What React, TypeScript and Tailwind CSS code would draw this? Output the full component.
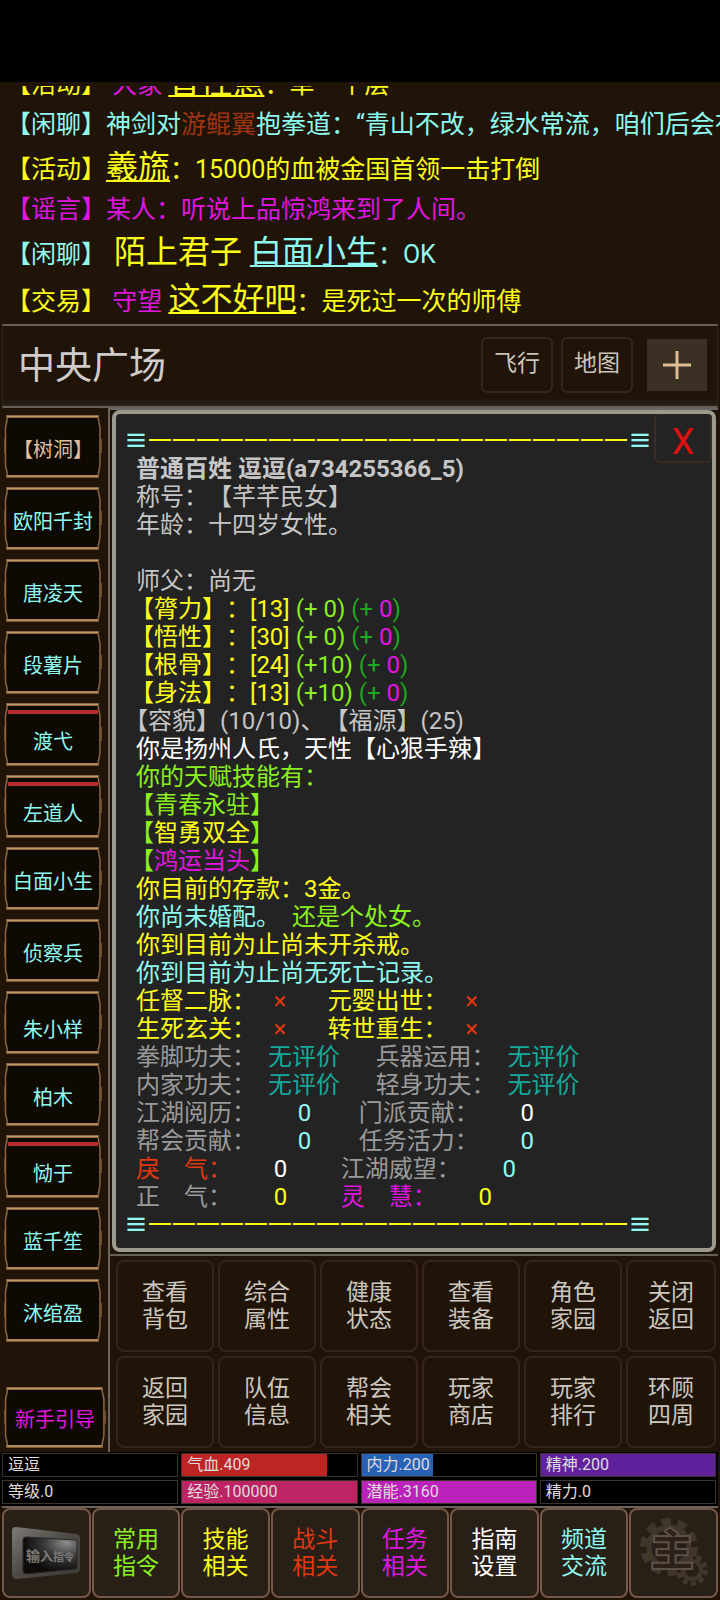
import type { ReactNode } from 'react'

const colors = {
  yellow: 'text-[#fdfd1a]',
  lime: 'text-[#8cf01e]',
  green: 'text-[#1fa51f]',
  magenta: 'text-[#e016e0]',
  cyan: 'text-[#8ffaf0]',
  teal: 'text-[#16a89c]',
  red: 'text-[#e0380f]',
  white: 'text-white',
  silver: 'text-[#c6c6c6]',
  gray: 'text-[#9a9a9a]',
}

type Color = keyof typeof colors

function C({ c, children }: { c: Color; children: ReactNode }) {
  return <span className={colors[c]}>{children}</span>
}

const npcs = [
  { name: '【树洞】', tan: true },
  { name: '欧阳千封' },
  { name: '唐凌天' },
  { name: '段薯片' },
  { name: '渡弋', hp: 100 },
  { name: '左道人', hp: 100 },
  { name: '白面小生' },
  { name: '侦察兵' },
  { name: '朱小样', hp: 0 },
  { name: '柏木' },
  { name: '恸于', hp: 100 },
  { name: '蓝千笙' },
  { name: '沐绾盈' },
]

const attributes = [
  { name: '膂力', value: '13', bonus: '(+ 0)' },
  { name: '悟性', value: '30', bonus: '(+ 0)' },
  { name: '根骨', value: '24', bonus: '(+10)' },
  { name: '身法', value: '13', bonus: '(+10)' },
]

const actions = [
  ['查看', '背包'],
  ['综合', '属性'],
  ['健康', '状态'],
  ['查看', '装备'],
  ['角色', '家园'],
  ['关闭', '返回'],
  ['返回', '家园'],
  ['队伍', '信息'],
  ['帮会', '相关'],
  ['玩家', '商店'],
  ['玩家', '排行'],
  ['环顾', '四周'],
]

const bars = [
  { label: '逗逗', fill: 0, color: 'bg-black' },
  { label: '气血.409', fill: 83, color: 'bg-[#bd2424]' },
  { label: '内力.200', fill: 41, color: 'bg-[#2862b4]' },
  { label: '精神.200', fill: 100, color: 'bg-[#60219d]' },
  { label: '等级.0', fill: 0, color: 'bg-black' },
  { label: '经验.100000', fill: 100, color: 'bg-[#bd2464]' },
  { label: '潜能.3160', fill: 100, color: 'bg-[#bb21bb]' },
  { label: '精力.0', fill: 0, color: 'bg-black' },
]

const menu: { lines: string[]; c: Color }[] = [
  { lines: ['常用', '指令'], c: 'lime' },
  { lines: ['技能', '相关'], c: 'yellow' },
  { lines: ['战斗', '相关'], c: 'red' },
  { lines: ['任务', '相关'], c: 'magenta' },
  { lines: ['指南', '设置'], c: 'white' },
  { lines: ['频道', '交流'], c: 'cyan' },
]

function Name({ children }: { children: ReactNode }) {
  return (
    <a href="#" className="text-[32px] leading-[47px] underline decoration-2 underline-offset-2">
      {children}
    </a>
  )
}

function ChatLine({ c, children }: { c: Color; children: ReactNode }) {
  return <p className={`shrink-0 whitespace-pre ${colors[c]}`}>{children}</p>
}

function ChatLog() {
  return (
    <div className="h-[242px] pt-1">
      <div className="flex h-full flex-col justify-end overflow-hidden pb-px pl-[6px] text-[25px] leading-[38px]">
        <ChatLine c="yellow">
          【活动】 <C c="magenta">大家</C> <Name>曾性慧</Name>：单一个层
        </ChatLine>
        <ChatLine c="cyan">
          【闲聊】神剑对<span className="text-[#9c3410]">游鲲翼</span>抱拳道：“青山不改，绿水常流，咱们后会有期”
        </ChatLine>
        <ChatLine c="yellow">
          【活动】<Name>羲旒</Name>：15000的血被金国首领一击打倒
        </ChatLine>
        <ChatLine c="magenta">【谣言】某人：听说上品惊鸿来到了人间。</ChatLine>
        <ChatLine c="cyan">
          【闲聊】<span className="text-[32px] leading-[47px] text-[#fdfd1a]"> 陌上君子 </span><Name>白面小生</Name>：OK
        </ChatLine>
        <ChatLine c="yellow">
          【交易】 <C c="magenta">守望</C> <Name>这不好吧</Name>：是死过一次的师傅
        </ChatLine>
      </div>
    </div>
  )
}

function Header() {
  return (
    <header className="mx-[2px] flex h-[84px] items-center border-x border-t-2 border-b-2 border-x-[#33261b] border-t-[#655f5a] border-b-[#655f5a] bg-gradient-to-b from-[#1f1407] from-90% to-[#2b201b] pr-[10px] pl-[15px]">
      <h1 className="flex-1 text-[37px] leading-none text-[#d0cccc]">中央广场</h1>
      <div className="flex items-center pb-[3px] text-[23px] text-[#c9c3bd]">
        <button className="h-14 w-[72px] rounded-md border-2 border-[#38241a]">飞行</button>
        <button className="ml-2 h-14 w-[72px] rounded-md border-2 border-[#38241a]">地图</button>
        <button aria-label="更多" className="ml-[14px] flex h-[52px] w-[60px] items-center justify-center bg-[#3a3024]">
          <svg viewBox="0 0 28 28" className="size-7" stroke="#e0bd92" strokeWidth="3">
            <path d="M14 0v28M0 14h28" />
          </svg>
        </button>
      </div>
    </header>
  )
}

function Frame() {
  return (
    <svg viewBox="0 0 98 63" preserveAspectRatio="none" fill="none" className="absolute inset-0 size-full">
      <path d="M4 1.5H94Q93 8 96 14V50Q93 56 94 61.5H4Q5 56 2 50V14Q5 8 4 1.5Z" fill="#0f0903" />
      <path d="M3 2C4 5 1.500 9 1.500 14V49C1.500 54 4 58 3 61" stroke="#8a6440" strokeWidth="1.500" />
      <path d="M94.500 2C93.500 5 96 9 96 14V49C96 54 93.500 58 94.500 61" stroke="#8a6440" strokeWidth="1.500" />
      <path d="M.6 24v14M97.400 24v14M95 27l2 5-2 5" stroke="#7a5636" />
      <path d="M2 1.500H95M2 61.500H95" stroke="#7a5838" strokeWidth="3" />
      <path d="M3 1.500H94M3 61H94" stroke="#c39a66" strokeWidth="1.500" />
    </svg>
  )
}

function Sidebar() {
  return (
    <aside className="flex w-[110px] shrink-0 flex-col border-r-2 border-[#6a645e] pt-[7px] pb-1 pl-1">
      <div className="flex flex-col gap-[9px]">
        {npcs.map((npc) => (
          <button
            key={npc.name}
            className={`relative flex h-[63px] w-[98px] flex-col px-1 pt-[7px] text-[20px] leading-none whitespace-nowrap ${npc.tan ? 'text-[#e0bfa0]' : 'text-[#8ffaf0]'}`}
          >
            <Frame />
            {npc.hp !== undefined && (
              <span className="relative h-1 w-full shrink-0">
                <span className="block h-full bg-[#b52a2a]" style={{ width: `${npc.hp}%` }} />
              </span>
            )}
            <span className="relative flex h-[55px] w-full shrink-0 items-center justify-center">{npc.name}</span>
          </button>
        ))}
      </div>
      <button className="relative mt-auto h-[61px] w-[102px] pt-1 text-[20px] leading-none text-[#e016e0]">
        <Frame />
        <span className="relative">新手引导</span>
      </button>
    </aside>
  )
}

function Rule() {
  return (
    <p className={`-ml-3 ${colors.yellow}`}>
      <span className="font-bold text-[#8ffaf0]">≡</span>
      一一一一一一一一一一一一一一一一一一一一
      <span className="font-bold text-[#8ffaf0]">≡</span>
    </p>
  )
}

function CharacterSheet() {
  return (
    <section className="relative mr-1 ml-[2px] flex-1 rounded-lg border-4 border-[#9c9a8c] bg-[#232323] pt-[13px] pb-[9px] pl-5 text-[24px] leading-[28px] whitespace-pre text-[#c6c6c6]">
      <Rule />
      <h2 className="font-bold">普通百姓 逗逗(a734255366_5)</h2>
      <p>称号：【芊芊民女】</p>
      <p>年龄：十四岁女性。</p>
      <p> </p>
      <p>师父：尚无</p>
      {attributes.map((a) => (
        <p key={a.name} className="-ml-[6px] text-[#fdfd1a]">
          【{a.name}】：[{a.value}] <C c="lime">{a.bonus}</C> <C c="green">(+ <C c="magenta">0</C>)</C>
        </p>
      ))}
      <p className="-ml-3">【容貌】(10/10)、【福源】(25)</p>
      <p className="text-white">你是扬州人氏，天性【心狠手辣】</p>
      <p className="text-[#8cf01e]">你的天赋技能有：</p>
      <p className="-ml-[6px] text-[#8cf01e]">【青春永驻】</p>
      <p className="-ml-[6px] text-[#8cf01e]">【<C c="yellow">智勇双全</C>】</p>
      <p className="-ml-[6px] text-[#8cf01e]">【<C c="magenta">鸿运当头</C>】</p>
      <p className="text-[#fdfd1a]">你目前的存款：3金。</p>
      <p className="text-[#8ffaf0]">你尚未婚配。{'  '}<C c="lime">还是个处女。</C></p>
      <p className="text-[#fdfd1a]">你到目前为止尚未开杀戒。</p>
      <p className="text-[#8ffaf0]">你到目前为止尚无死亡记录。</p>
      <p className="text-[#fdfd1a]">
        任督二脉：{'  '}<Cross />{'      '}元婴出世：{'  '}<Cross />
      </p>
      <p className="text-[#fdfd1a]">
        生死玄关：{'  '}<Cross />{'      '}转世重生：{'  '}<Cross />
      </p>
      <p className="text-[#9a9a9a]">
        拳脚功夫：{'  '}<C c="teal">无评价</C>{'      '}兵器运用：{'  '}<C c="teal">无评价</C>
      </p>
      <p className="text-[#9a9a9a]">
        内家功夫：{'  '}<C c="teal">无评价</C>{'      '}轻身功夫：{'  '}<C c="teal">无评价</C>
      </p>
      <p className="text-[#9a9a9a]">
        江湖阅历：{'       '}<C c="cyan">0</C>{'        '}门派贡献：{'       '}<C c="white">0</C>
      </p>
      <p className="text-[#9a9a9a]">
        帮会贡献：{'       '}<C c="cyan">0</C>{'        '}任务活力：{'       '}<C c="cyan">0</C>
      </p>
      <p className="text-[#9a9a9a]">
        <C c="red">戾　气：</C>{'       '}<C c="white">0</C>{'         '}江湖威望：{'       '}<C c="cyan">0</C>
      </p>
      <p className="text-[#9a9a9a]">
        正　气：{'       '}<C c="yellow">0</C>{'         '}<C c="magenta">灵　慧：</C>{'       '}<C c="yellow">0</C>
      </p>
      <Rule />
      <button className="absolute top-0 right-0 h-[49px] w-[58px] rounded-md border-2 border-t-0 border-[#3a2b24] pt-2 text-[36px] leading-none text-[#e01010]">
        X
      </button>
    </section>
  )
}

function Cross() {
  return <span className="inline-block w-6 text-center text-[#e0380f]">×</span>
}

function ActionGrid() {
  return (
    <div className="mr-[2px] grid grid-cols-[98fr_98fr_98fr_98fr_98fr_90fr] gap-1 border-t-2 border-[#655f5a] pt-1 pr-[2px] pb-1 pl-2">
      {actions.map(([a, b]) => (
        <button
          key={a + b}
          className="h-[92px] rounded-lg border-2 border-[#36231a] text-[23px] leading-[27px] text-[#ccc7c0]"
        >
          {a}
          <br />
          {b}
        </button>
      ))}
    </div>
  )
}

function StatusBars() {
  return (
    <div className="mr-[2px] grid grid-cols-4 gap-[3px] bg-black pt-[1px] pr-[2px] pb-[2px] pl-[2px] text-[16px] leading-[22px] text-[#e0dcdc]">
      {bars.map((bar) => (
        <div key={bar.label} className="relative h-6 overflow-hidden border border-[#3b3328] bg-black">
          <div className={`absolute inset-y-0 left-0 ${bar.color}`} style={{ width: `${bar.fill}%` }} />
          <span className="relative pl-[5px]">{bar.label}</span>
        </div>
      ))}
    </div>
  )
}

function CommandIcon() {
  return (
    <svg viewBox="0 0 72 56" className="h-14 w-[72px]">
      <defs>
        <linearGradient id="bezel" x1="0" y1="0" x2="1" y2="1">
          <stop offset="0" stopColor="#7d7a77" />
          <stop offset=".5" stopColor="#4d4945" />
          <stop offset="1" stopColor="#3c3834" />
        </linearGradient>
        <radialGradient id="screen" cx=".8" cy=".15" r=".8">
          <stop offset="0" stopColor="#8d8d8d" />
          <stop offset=".5" stopColor="#3a3a3a" />
          <stop offset="1" stopColor="#0e0c0b" />
        </radialGradient>
      </defs>
      <path d="M6 2L67 9Q70 10 70 13V44Q70 47 67 48L7 54Q2 54 2 49V6Q2 2 6 2Z" fill="url(#bezel)" />
      <path d="M16 12L65 15Q67 15 67 17V42Q67 44 65 44L16 49Q13 49 13 46V15Q13 12 16 12Z" fill="url(#screen)" stroke="#2a2724" />
      <text x="16" y="36" fill="#7d7976" fontWeight="bold">
        <tspan fontSize="14">输</tspan>
        <tspan fontSize="13">入</tspan>
        <tspan fontSize="11">指</tspan>
        <tspan fontSize="10">令</tspan>
      </text>
    </svg>
  )
}

function GearIcon() {
  return (
    <svg viewBox="0 0 72 72" className="size-[72px]" fill="none" stroke="#40362c">
      <circle cx="31" cy="30" r="25" strokeWidth="8" strokeDasharray="9 6.700" />
      <circle cx="31" cy="30" r="20" strokeWidth="5" />
      <circle cx="54" cy="53" r="13" strokeWidth="6" strokeDasharray="5 3.170" />
      <circle cx="54" cy="53" r="9" strokeWidth="4" />
      <text x="34" y="49" textAnchor="middle" fontSize="44" fontWeight="900" fill="#2b2119" stroke="#5c5048" strokeWidth="2">
        主
      </text>
    </svg>
  )
}

function BottomMenu() {
  const cell =
    'flex h-[90px] items-center justify-center rounded-lg border-2 border-[#755847] bg-[#281f17] text-[23px] leading-[27px]'
  return (
    <nav className="mx-[2px] grid grid-cols-8 gap-px border-t-2 border-[#6b625e] pb-[2px]">
      <button aria-label="输入指令" className={cell}>
        <CommandIcon />
      </button>
      {menu.map((item) => (
        <button key={item.lines[0]} className={`${cell} ${colors[item.c]}`}>
          <span>
            {item.lines[0]}
            <br />
            {item.lines[1]}
          </span>
        </button>
      ))}
      <button aria-label="主菜单" className={cell}>
        <GearIcon />
      </button>
    </nav>
  )
}

export default function App() {
  return (
    <div className="flex min-h-screen flex-col overflow-hidden bg-[#1f1407] font-['Roboto','Noto_Sans_CJK_SC',sans-serif] [text-spacing-trim:space-all]">
      <div className="h-[82px] bg-black" />
      <ChatLog />
      <Header />
      <main className="flex flex-1">
        <Sidebar />
        <div className="-ml-[2px] flex min-w-0 flex-1 flex-col">
          <div className="mr-[2px] h-[2px] bg-[#6b6664]" />
          <div className="flex flex-1 flex-col border-l-2 border-[#6a645e] pb-[2px]">
            <CharacterSheet />
          </div>
          <ActionGrid />
        </div>
      </main>
      <StatusBars />
      <BottomMenu />
    </div>
  )
}
